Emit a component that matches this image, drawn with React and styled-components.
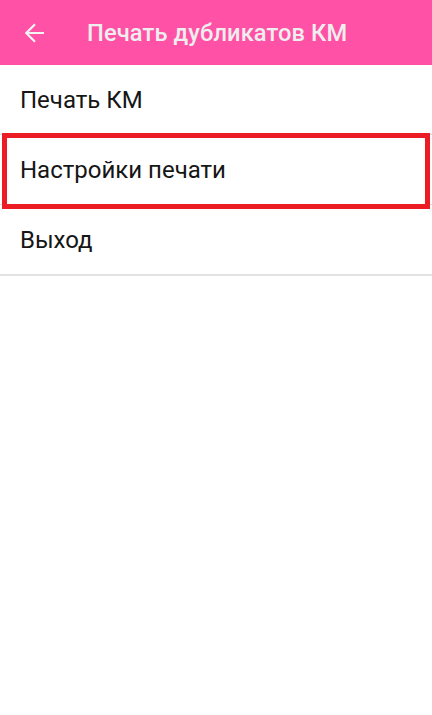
import React from "react";
import styled, { createGlobalStyle } from "styled-components";

const GlobalStyle = createGlobalStyle`
  html, body {
    margin: 0;
    padding: 0;
    background: #ffffff;
    font-family: Roboto, "Liberation Sans", sans-serif;
  }
`;

const Screen = styled.div`
  width: 432px;
  height: 715px;
  background: #ffffff;
  display: flex;
  flex-direction: column;
`;

const Toolbar = styled.header`
  height: 65px;
  flex-shrink: 0;
  background: #ff51a6;
  display: flex;
  align-items: center;
  padding-left: 24px;
  box-sizing: border-box;
`;

const BackButton = styled.button`
  width: 20px;
  height: 20px;
  padding: 0;
  border: 0;
  background: transparent;
  display: flex;
  margin-top: 1px;
  svg {
    display: block;
  }
`;

const Title = styled.h1`
  margin: 0 0 0 43px;
  font-size: 23.7px;
  font-weight: 500;
  color: #eeeeee;
  letter-spacing: 0.1px;
`;

const Menu = styled.ul`
  list-style: none;
  margin: 0;
  padding: 0;
`;

const Item = styled.li`
  position: relative;
  height: 70px;
  display: flex;
  align-items: center;
  padding-left: 20px;
  font-size: 24px;
  color: #161616;
  border-bottom: 1px solid #dcdcdc;
  box-sizing: border-box;
  &:last-child {
    height: 71px;
    border-bottom: 2px solid #e2e2e2;
  }
`;

const Highlight = styled.span`
  position: absolute;
  left: 2px;
  right: 2px;
  top: -2px;
  bottom: -5px;
  border: 5px solid #ec1c24;
  pointer-events: none;
`;

const items = [
  { label: "Печать КМ" },
  { label: "Настройки печати", marked: true },
  { label: "Выход" },
];

export default function App() {
  return (
    <Screen>
      <GlobalStyle />
      <Toolbar>
        <BackButton aria-label="Назад">
          <svg width="20" height="20" viewBox="4 4 16 16">
            <path
              fill="#f4f4f4"
              d="M20 11.2H7.8l5.6-5.6L12.2 4.4 4.6 12l7.6 7.6 1.2-1.2-5.6-5.6H20z"
            />
          </svg>
        </BackButton>
        <Title>Печать дубликатов КМ</Title>
      </Toolbar>
      <Menu>
        {items.map((item) => (
          <Item key={item.label}>
            {item.label}
            {item.marked && <Highlight />}
          </Item>
        ))}
      </Menu>
    </Screen>
  );
}
